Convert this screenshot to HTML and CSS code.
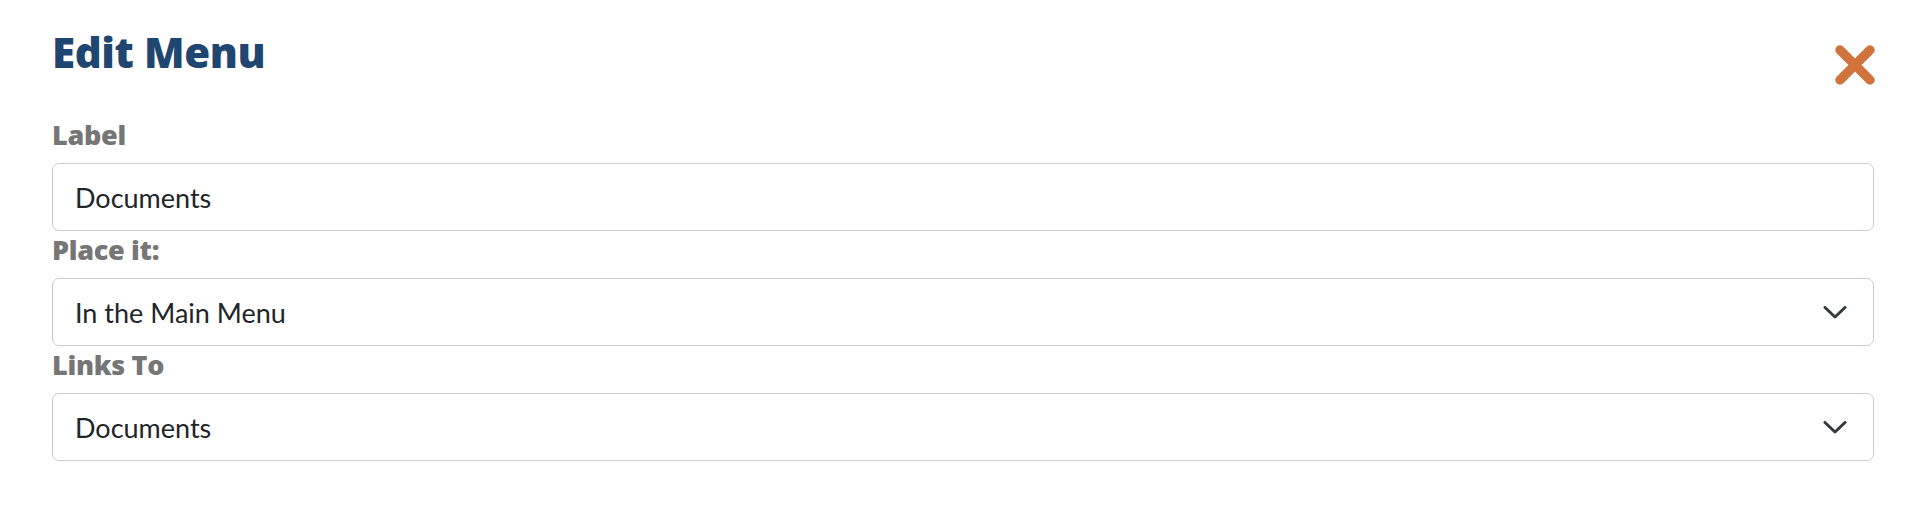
FILE: index.html
```html
<!DOCTYPE html>
<html lang="en">
<head>
<meta charset="utf-8">
<title>Edit Menu</title>
<link rel="stylesheet" href="styles.css">
</head>
<body>
<div class="dialog">
  <div class="header">
    <h1 class="title">Edit Menu</h1>
    <button class="close" type="button" aria-label="Close">
      <svg width="40" height="40" viewBox="0 0 40 40"><path d="M5 5 L35 35 M35 5 L5 35" stroke="#d1733d" stroke-width="9.5" stroke-linecap="round" fill="none"/></svg>
    </button>
  </div>
  <form class="form">
    <label class="label first" for="lbl">Label</label>
    <div class="control-wrap">
      <input id="lbl" class="control" type="text" value="Documents">
    </div>
    <label class="label" for="place">Place it:</label>
    <div class="control-wrap">
      <select id="place" class="control select">
        <option>In the Main Menu</option>
      </select>
      <svg class="chevron" width="24" height="13" viewBox="0 0 24 13"><polyline points="2,1.5 12,11 22,1.5" fill="none" stroke="#343a40" stroke-width="3" stroke-linecap="round" stroke-linejoin="round"/></svg>
    </div>
    <label class="label" for="links">Links To</label>
    <div class="control-wrap">
      <select id="links" class="control select">
        <option>Documents</option>
      </select>
      <svg class="chevron" width="24" height="13" viewBox="0 0 24 13"><polyline points="2,1.5 12,11 22,1.5" fill="none" stroke="#343a40" stroke-width="3" stroke-linecap="round" stroke-linejoin="round"/></svg>
    </div>
  </form>
</div>
</body>
</html>
```
FILE: styles.css
```css
html, body {
  margin: 0;
  padding: 0;
  background: #ffffff;
}
body {
  font-family: Lato, "Open Sans", sans-serif;
}
.dialog {
  padding: 26px 50px 0 52px;
}
.header {
  display: flex;
  justify-content: space-between;
  align-items: flex-start;
}
.title {
  margin: 0;
  font-family: "Open Sans", sans-serif;
  font-weight: 800;
  font-size: 42px;
  line-height: 52px;
  color: #1f4571;
  letter-spacing: -0.4px;
}
.close {
  margin: 19px -1px 0 0;
  padding: 0;
  width: 40px;
  height: 40px;
  border: 0;
  background: none;
  cursor: pointer;
  display: block;
}
.close svg {
  display: block;
}
.form {
  display: flex;
  flex-direction: column;
}
.label {
  display: block;
  font-family: "Open Sans", sans-serif;
  font-weight: 800;
  font-size: 27px;
  line-height: 33px;
  color: #767676;
  letter-spacing: -0.3px;
  margin: 0 0 12px 0;
}
.label.first {
  margin-top: 33px;
}
.control-wrap {
  position: relative;
  margin-bottom: 2px;
}
.control {
  display: block;
  width: 100%;
  box-sizing: border-box;
  height: 68px;
  margin: 0;
  padding: 0 60px 0 22px;
  border: 1.5px solid #c8cdd3;
  border-radius: 7px;
  background: #ffffff;
  font-family: Lato, sans-serif;
  font-size: 27px;
  color: #212529;
  outline: none;
}
.select {
  appearance: none;
  -webkit-appearance: none;
}
.chevron {
  position: absolute;
  right: 27px;
  top: 28px;
  pointer-events: none;
}
```
